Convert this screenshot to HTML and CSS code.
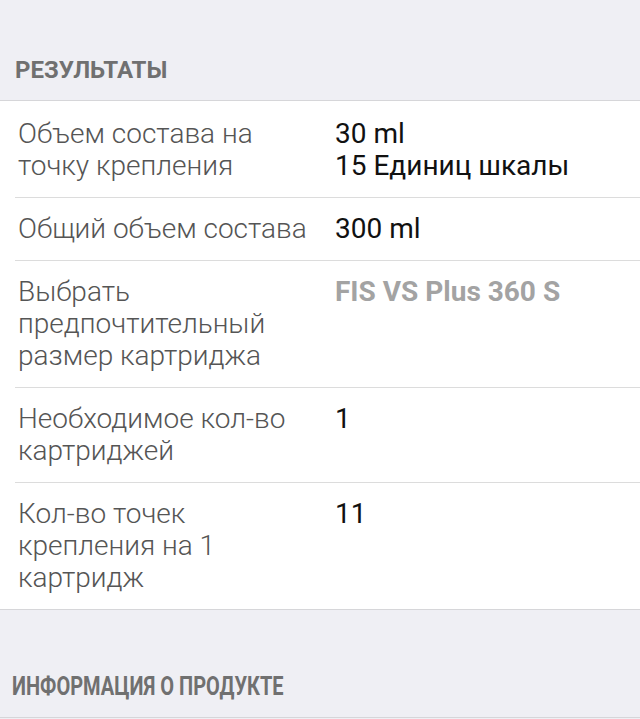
FILE: index.html
```html
<!DOCTYPE html>
<html lang="ru">
<head>
    <meta charset="utf-8">
    <link rel="stylesheet" href="styles.css">
</head>
<body>

    <div class="section-title first"><span>РЕЗУЛЬТАТЫ</span></div>

    <div class="table">
        <div class="row">
            <div class="label">Объем состава на точку крепления</div>
            <div class="value">30 ml<br>15 Единиц шкалы</div>
        </div>
        <div class="row">
            <div class="label">Общий объем состава</div>
            <div class="value">300 ml</div>
        </div>
        <div class="row">
            <div class="label">Выбрать предпочтительный размер картриджа</div>
            <div class="value select">FIS VS Plus 360 S</div>
        </div>
        <div class="row">
            <div class="label">Необходимое кол-во картриджей</div>
            <div class="value">1</div>
        </div>
        <div class="row">
            <div class="label">Кол-во точек крепления на 1 картридж</div>
            <div class="value">11</div>
        </div>
    </div>

    <div class="section-title second"><span>ИНФОРМАЦИЯ О ПРОДУКТЕ</span></div>

</body>
</html>
```

FILE: styles.css
```css
html, body {
    margin: 0;
    padding: 0;
}

body {
    background: #efeff4;
    font-family: Roboto, "Noto Sans", sans-serif;
    width: 640px;
    height: 719px;
    overflow: hidden;
}

.section-title {
    box-sizing: border-box;
    padding: 0 15px 16px;
    font-weight: 700;
    color: #707070;
    display: flex;
    align-items: flex-end;
    border-bottom: 1px solid #d6d6d9;
    line-height: 28px;
}

.section-title.first {
    height: 101px;
    font-size: 24px;
}

.section-title.second {
    height: 108px;
    font-size: 25px;
    padding-left: 12px;
}

/* the second header is drawn in a narrow cut */
.section-title.second span {
    display: inline-block;
    transform: scaleX(0.8);
    transform-origin: left center;
    white-space: nowrap;
}

.table {
    background: #fff;
    padding-left: 15px;
    border-bottom: 1px solid #d6d6d9;
}

.row {
    display: flex;
    padding: 15px 0;
    border-bottom: 1px solid #dcdcdc;
}

.row:first-child {
    padding-top: 17px;
}

.row:last-child {
    border-bottom: none;
}

.label {
    width: 292px;
    padding-left: 3px;
    padding-right: 25px;
    font-family: "Roboto Light", Roboto, sans-serif;
    font-size: 28px;
    font-weight: 300;
    line-height: 32px;
    color: #555;
}

.value {
    flex: 1;
    font-size: 28px;
    line-height: 32px;
    color: #111;
}

.value.select {
    font-weight: 700;
    color: #a3a3a3;
}
```
